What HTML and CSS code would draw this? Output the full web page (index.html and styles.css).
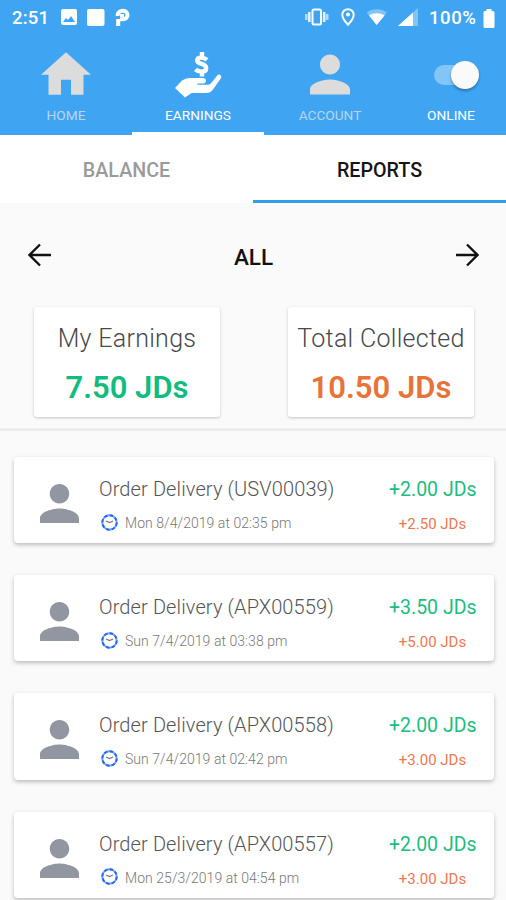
FILE: index.html
```html
<!DOCTYPE html>
<html lang="en">
<head>
    <meta charset="UTF-8">
    <meta name="viewport" content="width=device-width, initial-scale=1.0">
    <title>Earnings Reports</title>
    <link rel="stylesheet" href="styles.css">
</head>
<body>
    <svg width="0" height="0" class="sprite">
        <symbol id="person" viewBox="4 4 16 16">
            <path d="M12 12c2.21 0 4-1.79 4-4s-1.79-4-4-4-4 1.79-4 4 1.79 4 4 4zm0 2c-2.67 0-8 1.34-8 4v2h16v-2c0-2.66-5.33-4-8-4z"/>
        </symbol>
        <symbol id="clock" viewBox="0 0 17 17">
            <circle cx="8.5" cy="8.5" r="7.2" fill="none" stroke="#6fa0fa" stroke-width="2"/>
            <circle cx="8.5" cy="8.5" r="7.2" fill="none" stroke="#2468f2" stroke-width="2" stroke-dasharray="3.4 2.25"/>
            <path d="M5 7l3.5 1.5L12 7" fill="none" stroke="#777" stroke-width="1.3"/>
        </symbol>
    </svg>

    <header class="header">
        <div class="status-bar">
            <span class="time">2:51</span>
            <svg class="status-left" width="72" height="20" viewBox="0 0 72 20" fill="#fff">
                <path fill-rule="evenodd" d="M3 1h12a2 2 0 0 1 2 2v12a2 2 0 0 1-2 2H3a2 2 0 0 1-2-2V3a2 2 0 0 1 2-2zm0 13h12l-4-6-3 4-2-2z"/>
                <rect x="27" y="1" width="17.5" height="17" rx="2"/>
                <path d="M58.2 18v-7M57.5 8C57.500 4.500 60 2.700 63 2.700c6 0 6 8.600 0 8.600h-3M62 6v3" fill="none" stroke="#fff" stroke-width="4"/>
            </svg>
            <svg class="status-right" width="116" height="20" viewBox="0 0 116 20" fill="#fff">
                <rect x="7.5" y="1.5" width="8.5" height="15" rx="1.5" fill="none" stroke="#fff" stroke-width="2"/>
                <path d="M4.3 4v10M19.2 4v10" stroke="#fff" stroke-width="2.6" opacity=".85"/>
                <path d="M1.3 6v6M22.2 6v6" stroke="#fff" stroke-width="2.6" opacity=".6"/>
                <path d="M43 1.2c-3.3 0-5.7 2.5-5.7 5.5 0 4 5.7 10 5.7 10s5.7-6 5.7-10c0-3-2.4-5.5-5.7-5.5z" fill="none" stroke="#fff" stroke-width="2"/>
                <circle cx="43" cy="6.5" r="2"/>
                <path d="M61.5 4.5c6-4.5 14.500-4.500 20.500 0L71.700 17z" opacity=".35"/>
                <path d="M64 7.500c4-3 11.500-3 15.500 0l-7.800 9.500z"/>
                <path d="M113 0v18H93z" opacity=".35"/>
                <path d="M108 4.500V18H93z"/>
            </svg>
            <span class="battery-text">100%</span>
            <svg class="battery" width="12" height="19" viewBox="0 0 12 19" fill="#fff">
                <path d="M3.5 0h5v2H10a1.5 1.5 0 0 1 1.5 1.5v14A1.5 1.5 0 0 1 10 19H2A1.5 1.5 0 0 1 .5 17.5v-14A1.5 1.5 0 0 1 2 2h1.5z"/>
            </svg>
        </div>
        <nav class="nav">
            <a class="nav-item">
                <svg class="nav-icon" width="50" height="43" viewBox="2 3 20 17"><path d="M10 20v-6h4v6h5v-8h3L12 3 2 12h3v8z"/></svg>
                <span>HOME</span>
            </a>
            <a class="nav-item active">
                <svg class="nav-icon" width="48" height="48" viewBox="0 0 48 48">
                    <path d="M1 37l7-7.5q4-3 9-2.5h12q3 0 3 2.5t-3 3h-5.500v1.200H34q2 0 3.500-2l5.500-7q1.500-2 3.500-.8 1.500 1.300.4 3.300L39 38.500Q36.500 42 32 42H17.500L11 46.500z"/>
                    <path d="M33 8.800q-2.500-2.200-6-2.200-3.800 0-3.800 3 0 2.200 4.300 3.300 4.700 1.300 4.700 4.400 0 3.300-4.700 3.300-3.600 0-6-2.300M28 1v5M28 20.500v5" fill="none" stroke="#fff" stroke-width="4.400"/>
                </svg>
                <span>EARNINGS</span>
            </a>
            <a class="nav-item">
                <svg class="nav-icon" width="40" height="41"><use href="#person"/></svg>
                <span>ACCOUNT</span>
            </a>
            <div class="nav-item online">
                <div class="switch"><div class="thumb"></div></div>
                <span>ONLINE</span>
            </div>
        </nav>
    </header>

    <div class="tabs">
        <div class="tab">BALANCE</div>
        <div class="tab active">REPORTS</div>
    </div>

    <section class="summary">
        <div class="period">
            <svg width="24" height="24" viewBox="0 0 24 24"><path d="M23 12H2M12 1.5L1.5 12 12 22.5"/></svg>
            <h1>ALL</h1>
            <svg width="24" height="24" viewBox="0 0 24 24"><path d="M1 12h21M12 1.5L22.5 12 12 22.5"/></svg>
        </div>
        <div class="totals">
            <div class="total">
                <div class="total-label">My Earnings</div>
                <div class="total-value earned">7.50 JDs</div>
            </div>
            <div class="total">
                <div class="total-label">Total Collected</div>
                <div class="total-value collected">10.50 JDs</div>
            </div>
        </div>
    </section>

    <main class="orders">
        <div class="order">
            <svg class="avatar"><use href="#person"/></svg>
            <div class="order-info">
                <div class="order-title">Order Delivery (USV00039)</div>
                <div class="order-date"><svg><use href="#clock"/></svg>Mon 8/4/2019 at 02:35 pm</div>
            </div>
            <div class="amounts">
                <div class="amount-earned">+2.00 JDs</div>
                <div class="amount-collected">+2.50 JDs</div>
            </div>
        </div>
        <div class="order">
            <svg class="avatar"><use href="#person"/></svg>
            <div class="order-info">
                <div class="order-title">Order Delivery (APX00559)</div>
                <div class="order-date"><svg><use href="#clock"/></svg>Sun 7/4/2019 at 03:38 pm</div>
            </div>
            <div class="amounts">
                <div class="amount-earned">+3.50 JDs</div>
                <div class="amount-collected">+5.00 JDs</div>
            </div>
        </div>
        <div class="order">
            <svg class="avatar"><use href="#person"/></svg>
            <div class="order-info">
                <div class="order-title">Order Delivery (APX00558)</div>
                <div class="order-date"><svg><use href="#clock"/></svg>Sun 7/4/2019 at 02:42 pm</div>
            </div>
            <div class="amounts">
                <div class="amount-earned">+2.00 JDs</div>
                <div class="amount-collected">+3.00 JDs</div>
            </div>
        </div>
        <div class="order">
            <svg class="avatar"><use href="#person"/></svg>
            <div class="order-info">
                <div class="order-title">Order Delivery (APX00557)</div>
                <div class="order-date"><svg><use href="#clock"/></svg>Mon 25/3/2019 at 04:54 pm</div>
            </div>
            <div class="amounts">
                <div class="amount-earned">+2.00 JDs</div>
                <div class="amount-collected">+3.00 JDs</div>
            </div>
        </div>
    </main>
</body>
</html>
```
FILE: styles.css
```css
* {
    margin: 0;
    padding: 0;
    box-sizing: border-box;
}

body {
    font-family: Roboto, sans-serif;
    background: #fafafa;
    height: 900px;
    overflow: hidden;
    white-space: nowrap;
}

svg {
    display: block;
    flex-shrink: 0;
}

.sprite {
    position: absolute;
}

.header {
    height: 135px;
    background: #3fa5f3;
    color: #fff;
}

.status-bar {
    height: 36px;
    padding: 0 11px 0 12px;
    display: flex;
    align-items: center;
    font-size: 18.5px;
    font-weight: 500;
}

.time {
    width: 48px;
    letter-spacing: 0.2px;
}

.status-right {
    margin-left: auto;
}

.battery-text {
    margin-left: 8px;
    width: 54px;
    letter-spacing: 0.6px;
}

.nav {
    height: 99px;
    display: grid;
    grid-template-columns: 132px 132px 132px 1fr;
}

.nav-item {
    display: flex;
    flex-direction: column;
    align-items: center;
    justify-content: flex-end;
    padding-bottom: 9px;
    font-size: 13.7px;
    line-height: 16px;
    color: #b9d5ec;
    border-bottom: 3px solid transparent;
}

.nav-icon {
    fill: #dcdcdc;
    margin-bottom: 12px;
}

.nav-item.active {
    color: #fff;
    border-bottom-color: #fff;
}

.active .nav-icon {
    fill: #fff;
    margin-bottom: 8px;
}

.nav-item.online {
    color: #fff;
}

.switch {
    display: flex;
    align-items: center;
    justify-content: flex-end;
    width: 41px;
    height: 20px;
    margin: 0 0 22px 7px;
    border-radius: 10px;
    background: #84c5f8;
}

.thumb {
    flex-shrink: 0;
    width: 28px;
    height: 28px;
    margin-right: -4px;
    border-radius: 50%;
    background: #fafafa;
    box-shadow: 0 2px 3px rgba(0, 0, 0, 0.3);
}

.tabs {
    height: 68px;
    display: grid;
    grid-template-columns: 1fr 1fr;
    background: #fff;
}

.tab {
    height: 68px;
    text-align: center;
    line-height: 71px;
    font-size: 19.7px;
    font-weight: 500;
    color: #9a9a9a;
}

.tab.active {
    color: #151515;
    border-bottom: 3px solid #309fe6;
}

.summary {
    height: 228px;
    border-bottom: 3px solid #ececec;
}

.period {
    height: 104px;
    padding: 0 27px 0 28px;
    display: flex;
    align-items: center;
    justify-content: space-between;
}

.period svg {
    fill: none;
    stroke: #111;
    stroke-width: 2.3;
}

.period h1 {
    font-size: 22.5px;
    font-weight: 500;
    color: #111;
    padding-top: 3px;
}

.totals {
    display: flex;
    justify-content: space-between;
    padding: 0 32px 0 34px;
}

.total {
    width: 186px;
    height: 110px;
    padding-top: 14px;
    border-radius: 3px;
    background: #fff;
    box-shadow: 0 1px 3px rgba(0, 0, 0, 0.22);
    text-align: center;
}

.total-label {
    font-size: 25px;
    font-weight: 300;
    line-height: 35px;
    letter-spacing: 0.3px;
    color: #484848;
}

.total-value {
    font-size: 31px;
    line-height: 40px;
    margin-top: 12px;
    font-weight: 600;
}

.earned {
    color: #10bd7c;
}

.collected {
    color: #e8733a;
}

.orders {
    padding: 26px 12px 0 14px;
    display: grid;
    gap: 32px;
}

.order {
    height: 86.2px;
    padding: 0 18px 0 26px;
    display: flex;
    border-radius: 4px;
    background: #fff;
    box-shadow: 0 2px 4px rgba(0, 0, 0, 0.25);
}

.avatar {
    width: 39px;
    height: 39px;
    margin: 27px 20px 0 0;
    fill: #9296a0;
}

.order-info {
    flex: 1;
    padding-top: 20px;
}

.order-title {
    font-size: 20px;
    font-weight: 300;
    line-height: 24px;
    letter-spacing: 0.12px;
    color: #555;
}

.order-date {
    display: flex;
    align-items: center;
    margin-top: 12px;
    font-size: 14px;
    font-weight: 300;
    line-height: 20px;
    letter-spacing: 0.05px;
    color: #777;
}

.order-date svg {
    width: 17px;
    height: 17px;
    margin: -2px 7px 0 2px;
}

.amounts {
    width: 87px;
    padding-top: 21px;
    text-align: center;
}

.amount-earned {
    font-size: 19.5px;
    line-height: 24px;
    color: #1bbd80;
}

.amount-collected {
    margin-top: 12px;
    font-size: 15px;
    line-height: 20px;
    color: #ec7850;
}
```
